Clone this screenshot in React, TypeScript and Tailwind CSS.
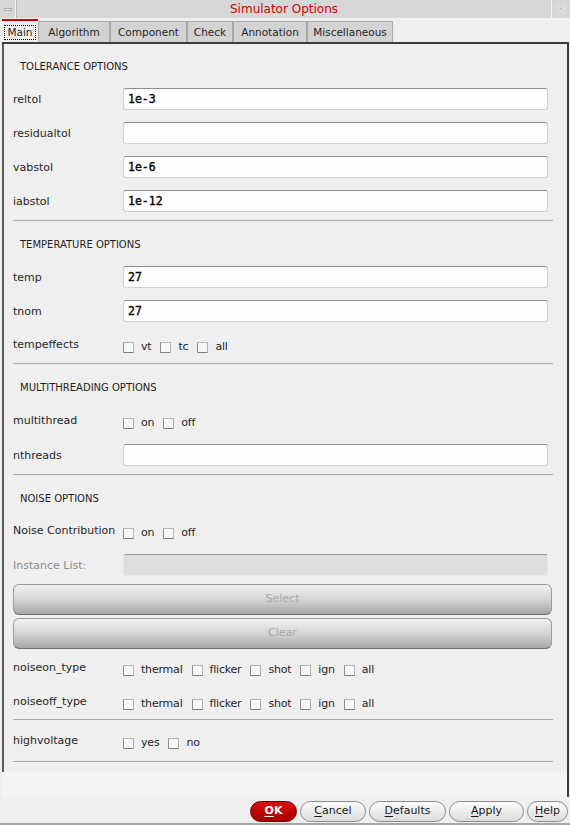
import React from "react"

function Check({ label }: { label: string }) {
  return (
    <span className="flex items-center">
      <span className="h-[11px] w-[11px] rounded-[1px] border border-[#b4b4b4] border-b-[#7c7c7c] border-l-[#8e8e8e] bg-[#f7f7f7]" />
      <span className="ml-[7px] mr-[9px] tracking-[-0.2px]">{label}</span>
    </span>
  )
}

function Field({ label, value }: { label: string; value?: string }) {
  return (
    <div className="flex h-[34px] items-center">
      <div className="mt-[3px] w-[110px]">{label}</div>
      <div className="mr-[5px] flex h-[22px] flex-1 items-center rounded-[3px] border border-[#cfcfcf] border-t-[#8e8e8e] bg-[#fefefe] pl-[4px] pt-[2px] font-['DejaVu_Sans_Mono',monospace] text-[11.5px] text-black [-webkit-text-stroke:0.35px_black]">
        {value}
      </div>
    </div>
  )
}

function Checks({ label, items, h = "h-[34px]" }: { label: string; items: string[]; h?: string }) {
  return (
    <div className={`flex items-center ${h}`}>
      <div className="w-[110px]">{label}</div>
      <div className="mt-[5px] flex">
        {items.map((i) => (
          <Check key={i} label={i} />
        ))}
      </div>
    </div>
  )
}

function Heading({ text, h }: { text: string; h: string }) {
  return (
    <div className={`flex items-center pl-[7px] text-[10px] text-[#1e1e1e] ${h}`}>{text}</div>
  )
}

function Sep({ mt }: { mt: string }) {
  return <div className={`h-px bg-[#a9a9a9] ${mt}`} />
}

function BigButton({ text, mt }: { text: string; mt: string }) {
  return (
    <div
      className={`mr-[1px] flex h-[31px] items-center justify-center rounded-[6px] border border-[#9c9c9c] border-b-[#6e6e6e] bg-gradient-to-b from-[#f2f2f2] via-[#d4d4d4] to-[#a8a8a8] text-[#a8a8a8] ${mt}`}
    >
      {text}
    </div>
  )
}

function PillButton({ text, w, red }: { text: string; w: string; red?: boolean }) {
  const first = text.slice(0, 1)
  const rest = text.slice(1)
  return (
    <div
      className={`flex h-[21px] items-center justify-center rounded-full border ${w} ${
        red
          ? "border-[#6a0000] bg-gradient-to-b from-[#d81010] to-[#a80000] font-bold text-white"
          : "border-[#8a8a8a] bg-gradient-to-b from-[#fbfbfb] to-[#dcdcdc] text-[#1a1a1a]"
      }`}
    >
      <span>
        <span className="underline underline-offset-2">{first}</span>
        {rest}
      </span>
    </div>
  )
}

const tabs = ["Algorithm", "Component", "Check", "Annotation", "Miscellaneous"]
const tabWidths = ["w-[72px]", "w-[77px]", "w-[46px]", "w-[74px]", "w-[86px]"]

export default function App() {
  return (
    <div className="flex h-[825px] w-[570px] flex-col overflow-hidden bg-[#efefef] font-['DejaVu_Sans',sans-serif] text-[11px] text-[#262626]">
      {/* title bar */}
      <div className="flex h-[18px] bg-[#d7d7d7]">
        <div className="flex w-[16px] items-center justify-center border-r border-[#f2f2f2]">
          <span className="h-[3px] w-[8px] border border-[#a8a8a8] bg-[#ececec]" />
        </div>
        <div className="flex flex-1 items-center justify-center border-l border-[#b8b8b8] text-[12px] text-[#d40000]">
          Simulator Options
        </div>
        <div className="flex w-[19px] items-center justify-center border-l border-[#f2f2f2]">
          <svg width="12" height="12" viewBox="0 0 12 12">
            <path d="M2 2 L10 10 M10 2 L2 10" stroke="#f4f4f4" strokeWidth="2.5" strokeDasharray="1.5 1" />
            <path d="M2 2 L10 10 M10 2 L2 10" stroke="#b9b9b9" strokeWidth="0.8" />
          </svg>
        </div>
      </div>

      {/* tabs */}
      <div className="flex h-[24px] items-end pl-[2px] pt-[1px] text-[10.5px]">
        <div className="flex h-[23px] w-[36px] items-center justify-center border-t-2 border-[#d00000] bg-[#efefef] pt-[1px]">
          <span className="border border-dotted border-black px-[2px] leading-[13px]">Main</span>
        </div>
        {tabs.map((t, i) => (
          <div
            key={t}
            className={`flex h-[21px] items-center justify-center border-l border-r border-t border-[#aaaaaa] bg-[#d3d3d3] pt-[1px] ${tabWidths[i]}`}
          >
            {t}
          </div>
        ))}
      </div>

      {/* panel */}
      <div className="ml-[2px] mr-[1px] flex flex-col border-r-2 border-t-2 border-[#3c3c3c]">
        <div className="flex h-[728px] flex-col border-l-2 border-[#5a5a5a] pl-[9px] pr-[14px]">
          <Heading text="TOLERANCE OPTIONS" h="h-[38px] pt-[6px]" />
          <Field label="reltol" value="1e-3" />
          <Field label="residualtol" />
          <Field label="vabstol" value="1e-6" />
          <Field label="iabstol" value="1e-12" />
          <Sep mt="mt-[2px]" />

          <Heading text="TEMPERATURE OPTIONS" h="h-[39px] pt-[7px]" />
          <Field label="temp" value="27" />
          <Field label="tnom" value="27" />
          <Checks label="tempeffects" items={["vt", "tc", "all"]} />
          <Sep mt="mt-[1px]" />

          <Heading text="MULTITHREADING OPTIONS" h="h-[40px] pt-[7px]" />
          <Checks label="multithread" items={["on", "off"]} />
          <Field label="nthreads" />
          <Sep mt="mt-[2px]" />

          <Heading text="NOISE OPTIONS" h="h-[39px] pt-[7px]" />
          <Checks label="Noise Contribution" items={["on", "off"]} />
          <div className="flex h-[34px] items-center">
            <div className="mt-[3px] w-[110px] text-[#8c8c8c]">Instance List:</div>
            <div className="mr-[5px] h-[22px] flex-1 rounded-[3px] border border-[#e6e6e6] border-t-[#9a9a9a] bg-[#dddddd]" />
          </div>
          <BigButton text="Select" mt="mt-[2px]" />
          <BigButton text="Clear" mt="mt-[3px]" />
          <Checks label="noiseon_type" items={["thermal", "flicker", "shot", "ign", "all"]} h="mt-[2px] h-[34px]" />
          <Checks label="noiseoff_type" items={["thermal", "flicker", "shot", "ign", "all"]} />
          <Sep mt="mt-0" />
          <Checks label="highvoltage" items={["yes", "no"]} h="h-[41px] pt-[1px]" />
          <Sep mt="mt-0" />
        </div>
        <div className="h-[25px] bg-[#f4f4f4]" />
      </div>

      {/* buttons */}
      <div className="flex h-[26px] items-center justify-end gap-[3px] pr-[2px] pt-[2px]">
        <PillButton text="OK" w="w-[47px]" red />
        <PillButton text="Cancel" w="w-[66px]" />
        <PillButton text="Defaults" w="w-[77px]" />
        <PillButton text="Apply" w="w-[75px]" />
        <PillButton text="Help" w="w-[41px]" />
      </div>
      <div className="h-[2px] bg-[#a4a4a4]" />
    </div>
  )
}
